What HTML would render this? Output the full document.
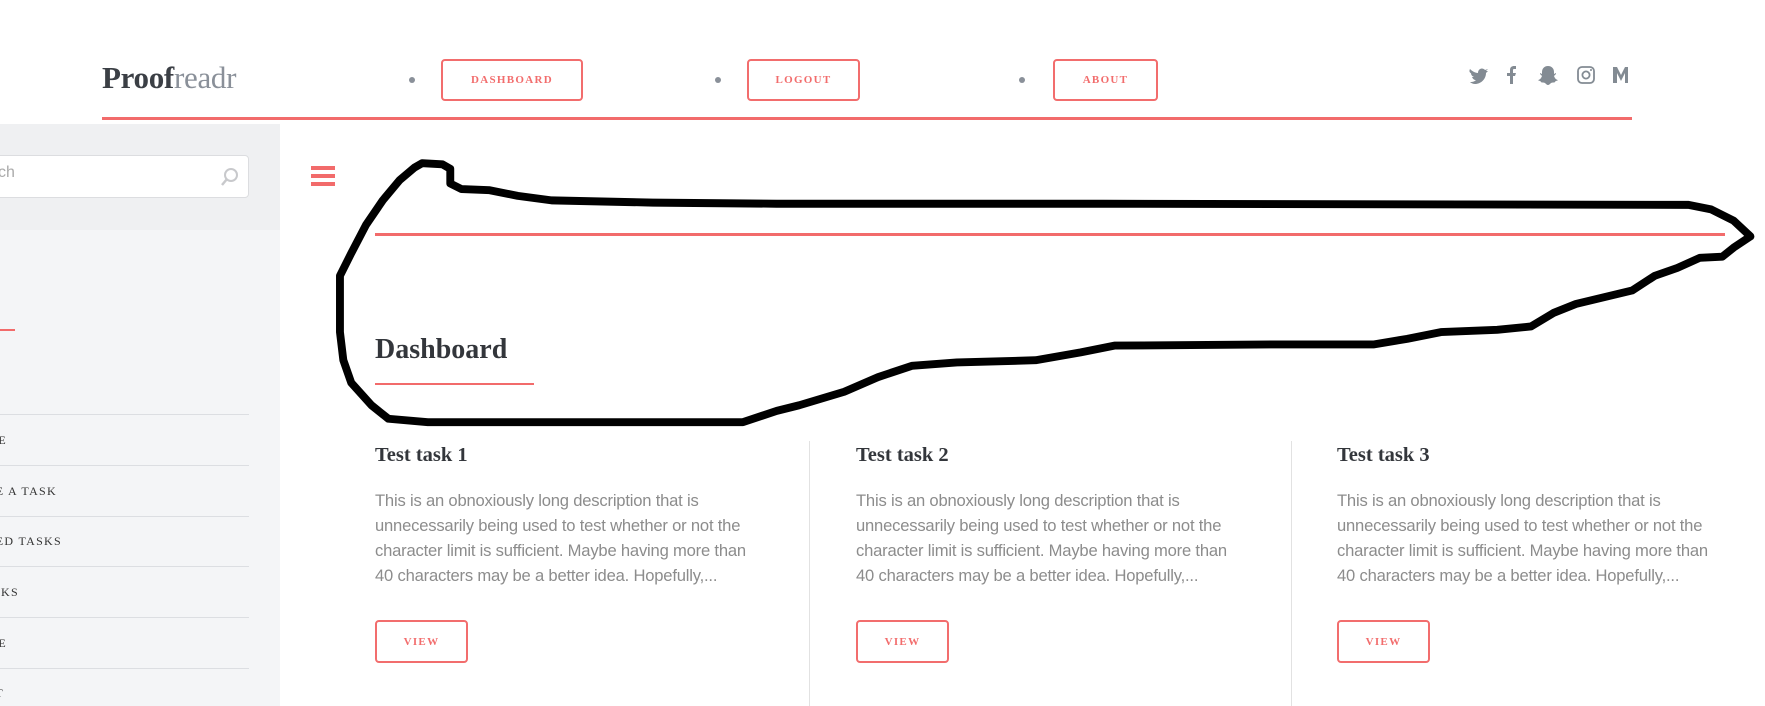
<!DOCTYPE html>
<html><head><meta charset="utf-8"><style>
*{margin:0;padding:0;box-sizing:border-box}
body{width:1765px;height:706px;overflow:hidden;background:#fff;position:relative;font-family:"Liberation Sans",sans-serif}
.a{position:absolute}
.logo{left:102px;top:60px;font-family:"Liberation Serif",serif;font-size:31px;color:#3b3f45;letter-spacing:-0.3px}
.logo b{font-weight:bold}.logo span{color:#8a9099}
.btn{position:absolute;border:2px solid #f26d6d;border-radius:4px;color:#f26d6d;font-family:"Liberation Serif",serif;font-weight:bold;font-size:11px;letter-spacing:1.3px;display:flex;align-items:center;justify-content:center;background:#fff}
.dot{position:absolute;width:6px;height:6px;border-radius:50%;background:#8a9099}
.mi{position:absolute;font-family:"Liberation Serif",serif;font-size:12px;letter-spacing:1.3px;color:#333;white-space:nowrap;text-align:right}
.ln{position:absolute;left:0;width:249px;height:1px;background:#dcdee2}
.col h3{position:absolute;font-family:"Liberation Serif",serif;font-weight:bold;font-size:20.5px;color:#33363b}
.col p{position:absolute;font-size:16.6px;line-height:25px;color:#8c8c8c;white-space:nowrap;letter-spacing:-0.2px}
</style></head><body>
<div class="a logo"><b>Proof</b><span>readr</span></div>
<div class="dot" style="left:409px;top:77px"></div>
<div class="btn" style="left:441px;top:59px;width:142px;height:42px">DASHBOARD</div>
<div class="dot" style="left:715px;top:77px"></div>
<div class="btn" style="left:747px;top:59px;width:113px;height:42px">LOGOUT</div>
<div class="dot" style="left:1019px;top:77px"></div>
<div class="btn" style="left:1053px;top:59px;width:105px;height:42px">ABOUT</div>
<svg class="a" style="left:1468px;top:64px" width="168" height="22" viewBox="0 0 168 22" fill="#838b93">
<path d="M2 5c2 2 5 4 8 4 0-4 4-6 7-3l3-1-2 2 2 0-2 2c0 6-5 11-11 11-2 0-4-1-5-2 2 0 4 0 6-2-2 0-3-1-4-3h2c-2-1-3-2-3-4l2 1C1 9 1 7 2 5z"/>
<path d="M42 20v-8h-3v-3h3V6c0-3 2-4 4-4h2v3h-2c-1 0-1 1-1 1v3h3l-1 3h-2v8z"/>
<path d="M80 2c4 0 6 3 6 6v2l2-1 0 1-2 2c1 3 3 4 4 4-1 1-3 1-3 2-1 1-2 0-4 1-1 1-2 2-3 2s-2-1-3-2c-2-1-3 0-4-1 0-1-2-1-3-2 1 0 3-1 4-4l-2-2 0-1 2 1V8c0-3 2-6 6-6z"/>
<rect x="110" y="3" width="16" height="16" rx="4" fill="none" stroke="#838b93" stroke-width="1.8"/><circle cx="118" cy="11" r="3.6" fill="none" stroke="#838b93" stroke-width="1.8"/><circle cx="123" cy="6" r="1"/>
<path d="M145 3h4l4 8 4-8h3v16h-3V9l-4 8-4-8v10h-4z"/>
</svg>
<div class="a" style="left:102px;top:117px;width:1530px;height:3px;background:#f26b6b"></div>
<div class="a" style="left:0;top:124px;width:280px;height:582px;background:#f4f5f7"></div>
<div class="a" style="left:0;top:124px;width:280px;height:106px;background:#eff0f2"></div>
<div class="a" style="left:-10px;top:155px;width:259px;height:43px;background:#fff;border:1px solid #dcdde0;border-radius:4px"></div>
<div class="a" style="left:-2px;top:164px;font-size:16px;color:#aaa">ch</div>
<svg class="a" style="left:218px;top:166px" width="22" height="22" viewBox="0 0 22 22"><circle cx="13" cy="9" r="6" fill="none" stroke="#c8c9cc" stroke-width="2"/><path d="M9 13l-5 6" stroke="#c8c9cc" stroke-width="2.5"/></svg>
<div class="a" style="left:0;top:329px;width:15px;height:2px;background:#f26b6b"></div>
<div class="ln" style="top:414px"></div><div class="ln" style="top:465px"></div><div class="ln" style="top:516px"></div><div class="ln" style="top:566px"></div><div class="ln" style="top:617px"></div><div class="ln" style="top:668px"></div>
<div class="mi" style="right:1758px;top:433px">HOME</div>
<div class="mi" style="right:1708px;top:484px">CREATE A TASK</div>
<div class="mi" style="right:1703px;top:534px">ACCEPTED TASKS</div>
<div class="mi" style="right:1746px;top:585px">MY TASKS</div>
<div class="mi" style="right:1758px;top:636px">PROFILE</div>
<div class="mi" style="right:1761px;top:686px">LOGOUT</div>
<div class="a" style="left:311px;top:166px;width:24px;height:4px;background:#f26b6b"></div>
<div class="a" style="left:311px;top:174px;width:24px;height:4px;background:#f26b6b"></div>
<div class="a" style="left:311px;top:182px;width:24px;height:4px;background:#f26b6b"></div>
<div class="a" style="left:375px;top:233px;width:1350px;height:3px;background:#f26b6b"></div>
<div class="a" style="left:375px;top:334px;font-family:'Liberation Serif',serif;font-weight:bold;font-size:28px;color:#33363b">Dashboard</div>
<div class="a" style="left:375px;top:383px;width:159px;height:2px;background:#f26b6b"></div>
<div class="a" style="left:809px;top:441px;width:1px;height:265px;background:#e2e2e2"></div>
<div class="a" style="left:1291px;top:441px;width:1px;height:265px;background:#e2e2e2"></div>
<div class="col">
<h3 style="left:375px;top:444px">Test task 1</h3>
<p style="left:375px;top:488px">This is an obnoxiously long description that is<br>unnecessarily being used to test whether or not the<br>character limit is sufficient. Maybe having more than<br>40 characters may be a better idea. Hopefully,...</p>
<h3 style="left:856px;top:444px">Test task 2</h3>
<p style="left:856px;top:488px">This is an obnoxiously long description that is<br>unnecessarily being used to test whether or not the<br>character limit is sufficient. Maybe having more than<br>40 characters may be a better idea. Hopefully,...</p>
<h3 style="left:1337px;top:444px">Test task 3</h3>
<p style="left:1337px;top:488px">This is an obnoxiously long description that is<br>unnecessarily being used to test whether or not the<br>character limit is sufficient. Maybe having more than<br>40 characters may be a better idea. Hopefully,...</p>
</div>
<div class="btn" style="left:375px;top:620px;width:93px;height:43px">VIEW</div>
<div class="btn" style="left:856px;top:620px;width:93px;height:43px">VIEW</div>
<div class="btn" style="left:1337px;top:620px;width:93px;height:43px">VIEW</div>
<svg class="a" style="left:0;top:0" width="1765" height="706"><g transform="scale(1.1257)"><path d="M375 145L393 146L400 150L400 163L410 168L435 169L460 174L490 178L580 180L690 181L980 181L1500 182L1520 186L1540 196L1555 210L1540 220L1530 228L1510 229L1490 238L1470 245L1450 258L1425 264L1400 270L1380 278L1360 290L1330 293L1280 295L1250 301L1220 306L1130 306L990 307L960 313L920 320L850 322L810 325L780 335L750 348L710 360L690 365L660 375L380 375L345 372L330 360L312 340L305 320L302 295L302 245L312 225L325 200L340 178L355 160L368 149Z" fill="none" stroke="#000" stroke-width="7" stroke-linejoin="round"/></g></svg>
</body></html>
